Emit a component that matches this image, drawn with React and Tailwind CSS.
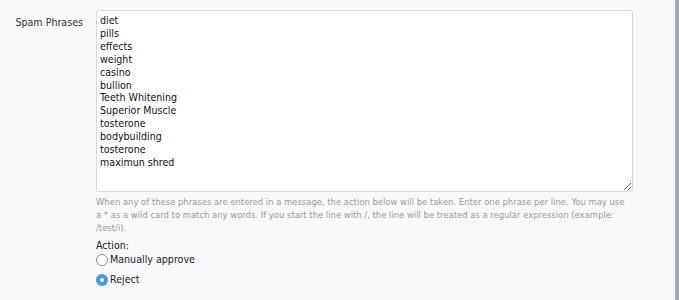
import React from "react";

const phrases = [
  "diet",
  "pills",
  "effects",
  "weight",
  "casino",
  "bullion",
  "Teeth Whitening",
  "Superior Muscle",
  "tosterone",
  "bodybuilding",
  "tosterone",
  "maximun shred",
];

const Radio = ({ checked, label }) => (
  <label className="flex items-center leading-[13px]">
    {checked ? (
      <span className="w-[12px] h-[12px] rounded-full bg-[#3f97e6] flex items-center justify-center">
        <span className="w-[4px] h-[4px] rounded-full bg-white" />
      </span>
    ) : (
      <span className="w-[12px] h-[12px] rounded-full border border-[#8f8f8f] bg-white" />
    )}
    <span className="ml-[2px] text-[#222]">{label}</span>
  </label>
);

export default function App() {
  return (
    <div
      className="w-[679px] h-[300px] bg-[#f9f9fb] flex overflow-hidden text-[10.6px] text-[#222]"
      style={{ fontFamily: '"DejaVu Sans Condensed", "Liberation Sans", sans-serif' }}
    >
      <div className="flex-1 flex pt-[10px]">
        <div className="w-[83px] text-right pt-[6px] text-[#333] leading-[13px]">Spam Phrases</div>
        <div className="ml-[13px] w-[537px]">
          <textarea
            readOnly
            defaultValue={phrases.join("\n")}
            className="block w-[537px] h-[182px] bg-white border border-[#d8d8d8] rounded-[3px] px-[3px] py-[3px] leading-[12.9px] text-[#111] outline-none"
          />
          <p className="mt-[3px] w-[535px] text-[9.4px] leading-[13px] text-[#9a9a9a]">
            When any of these phrases are entered in a message, the action below will be taken. Enter one phrase per line. You may use a * as a wild card to match any words. If you start the line with /, the line will be treated as a regular expression (example: /test/i).
          </p>
          <div className="mt-[5px] leading-[13px] text-[#222]">Action:</div>
          <div className="flex flex-col gap-[7px] mt-[1px]">
            <Radio label="Manually approve" />
            <Radio checked label="Reject" />
          </div>
        </div>
      </div>
      <div className="w-[4px] bg-[#a6abb1]" />
    </div>
  );
}
